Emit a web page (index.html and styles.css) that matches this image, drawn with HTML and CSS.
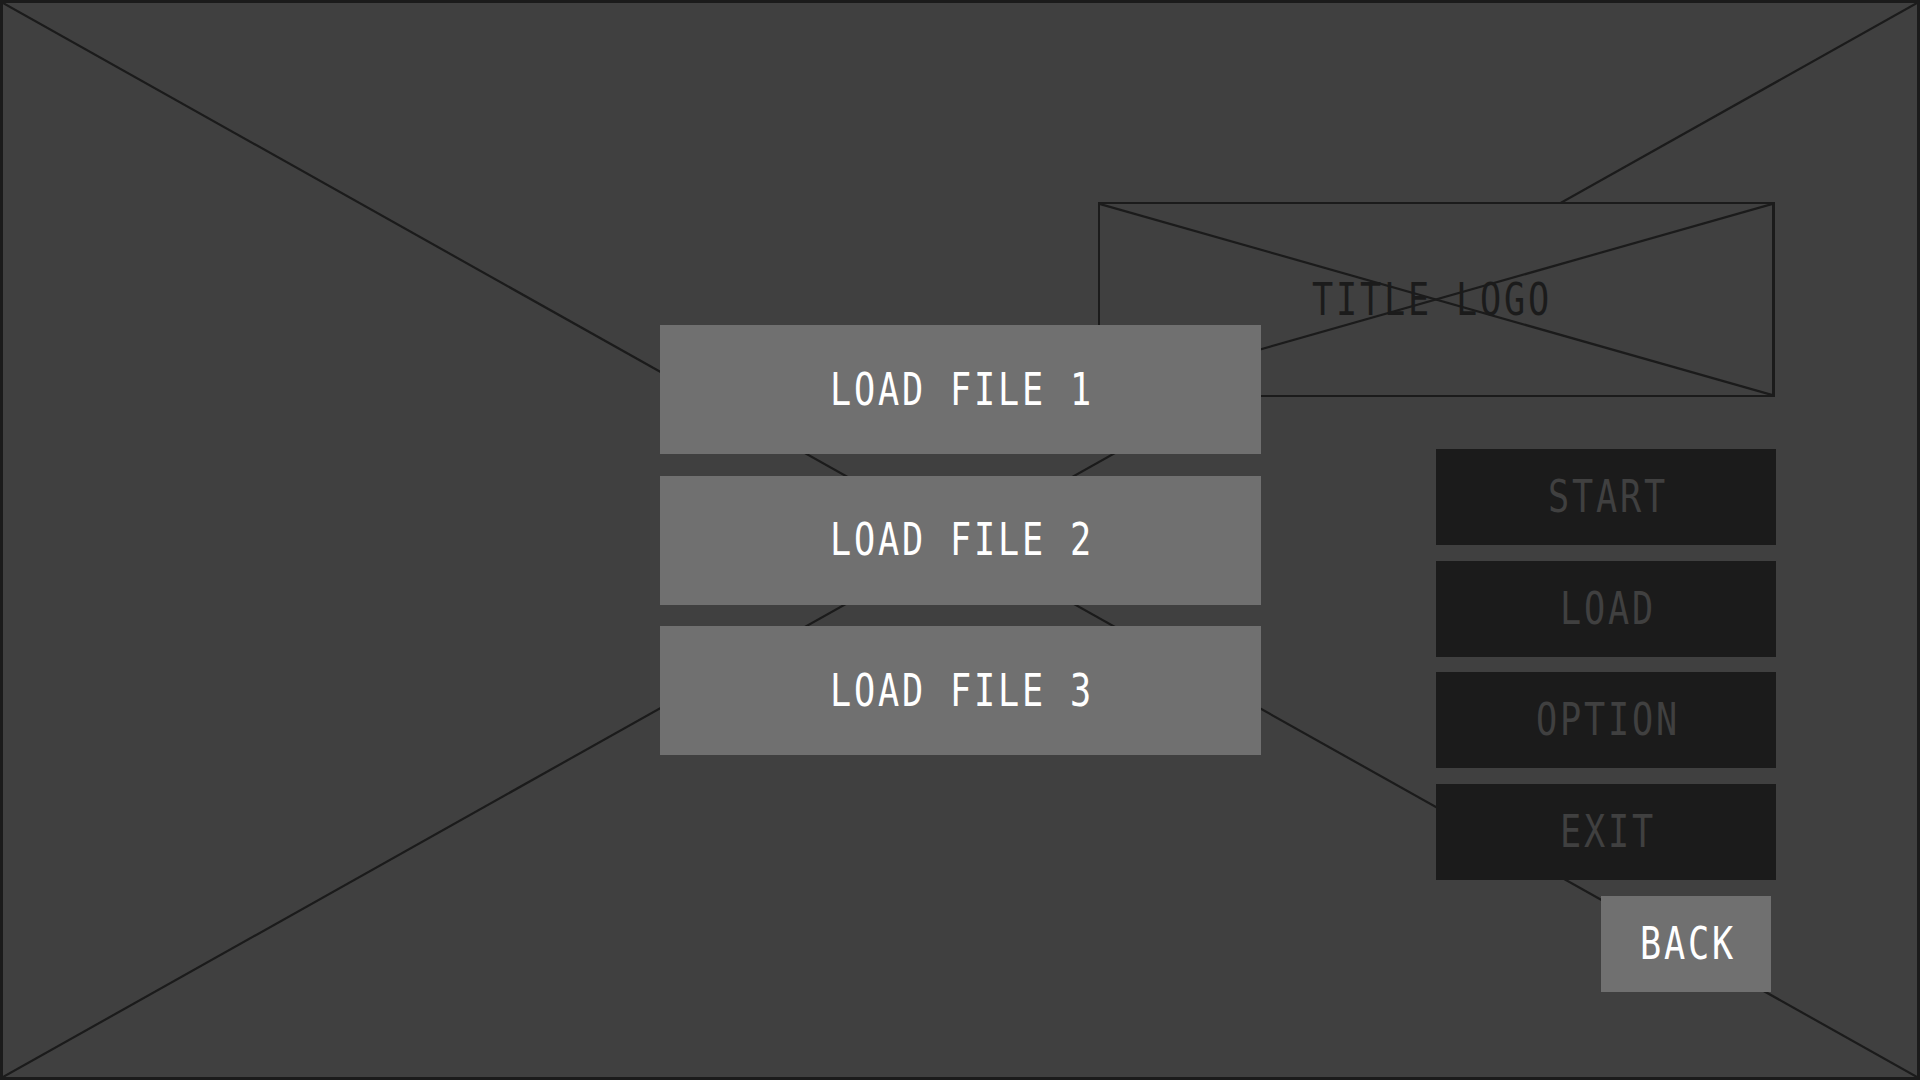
FILE: index.html
```html
<!DOCTYPE html>
<html lang="en">
<head>
    <meta charset="UTF-8">
    <title>Title Screen - Load</title>
    <link rel="stylesheet" href="styles.css">
</head>
<body>
    <div class="screen">
        <!-- placeholder cross for the background art -->
        <svg class="placeholder" viewBox="0 0 100 100" preserveAspectRatio="none">
            <line x1="0" y1="0" x2="100" y2="100"/>
            <line x1="100" y1="0" x2="0" y2="100"/>
        </svg>

        <div class="side">
            <div class="logo">
                <svg class="placeholder" viewBox="0 0 100 100" preserveAspectRatio="none">
                    <line x1="0" y1="0" x2="100" y2="100"/>
                    <line x1="100" y1="0" x2="0" y2="100"/>
                </svg>
                <span class="label label-logo">TITLE LOGO</span>
            </div>

            <div class="menu">
                <div class="menu-btn"><span class="label">START</span></div>
                <div class="menu-btn"><span class="label">LOAD</span></div>
                <div class="menu-btn"><span class="label">OPTION</span></div>
                <div class="menu-btn"><span class="label">EXIT</span></div>
            </div>

            <div class="back-btn"><span class="label">BACK</span></div>
        </div>

        <div class="load-panel">
            <div class="load-btn"><span class="label">LOAD FILE 1</span></div>
            <div class="load-btn"><span class="label">LOAD FILE 2</span></div>
            <div class="load-btn"><span class="label">LOAD FILE 3</span></div>
        </div>
    </div>
</body>
</html>
```

FILE: styles.css
```css
/* === BASE === */
body {
    margin: 0;
    background: #1b1b1b;
}

.screen {
    position: relative;
    box-sizing: border-box;
    width: 1920px;
    height: 1080px;
    border: 3px solid #1b1b1b;
    background: #404040;
    display: flex;
    justify-content: flex-end;
    overflow: hidden;
}

/* === PLACEHOLDER CROSSES === */
.placeholder {
    position: absolute;
    inset: 0;
    width: 100%;
    height: 100%;
}

.placeholder line {
    stroke: #1b1b1b;
    stroke-width: 2.2;
    vector-effect: non-scaling-stroke;
}

/* === LABELS (condensed mono) === */
.label {
    position: relative;
    display: inline-block;
    font-family: "DejaVu Sans Mono", "Liberation Mono", monospace;
    font-size: 44px;
    line-height: 1;
    white-space: pre;
    letter-spacing: 3.5px;
    margin-right: -3.5px;
    transform: scaleX(0.8);
}

.label-logo {
    color: #1b1b1b;
}

/* === RIGHT COLUMN === */
.side {
    position: relative;
    flex-shrink: 0;
    width: 678px;
    margin-right: 141px;
    padding-top: 199px;
    display: flex;
    flex-direction: column;
}

.logo {
    position: relative;
    flex-shrink: 0;
    box-sizing: border-box;
    width: 677px;
    height: 195px;
    padding-right: 11px;
    border: 2px solid #1b1b1b;
    border-right-width: 3px;
    background: #404040;
    display: flex;
    align-items: center;
    justify-content: center;
}

.menu {
    align-self: flex-end;
    width: 340px;
    margin-top: 52px;
    display: flex;
    flex-direction: column;
    gap: 15.7px;
}

.menu-btn {
    height: 96px;
    background: #1b1b1b;
    color: #404040;
    display: flex;
    align-items: center;
    justify-content: center;
}

.back-btn {
    align-self: flex-end;
    width: 170px;
    height: 96px;
    margin-top: 16px;
    margin-right: 5px;
    background: #707070;
    color: #fff;
    display: flex;
    align-items: center;
    justify-content: center;
}

/* === LOAD PANEL (over the title screen) === */
.load-panel {
    position: absolute;
    left: 0;
    right: 0;
    top: 322px;
    width: 601px;
    margin: 0 auto;
    display: flex;
    flex-direction: column;
    gap: 21.5px;
}

.load-btn {
    height: 129px;
    background: #707070;
    color: #fff;
    display: flex;
    align-items: center;
    justify-content: center;
}
```
